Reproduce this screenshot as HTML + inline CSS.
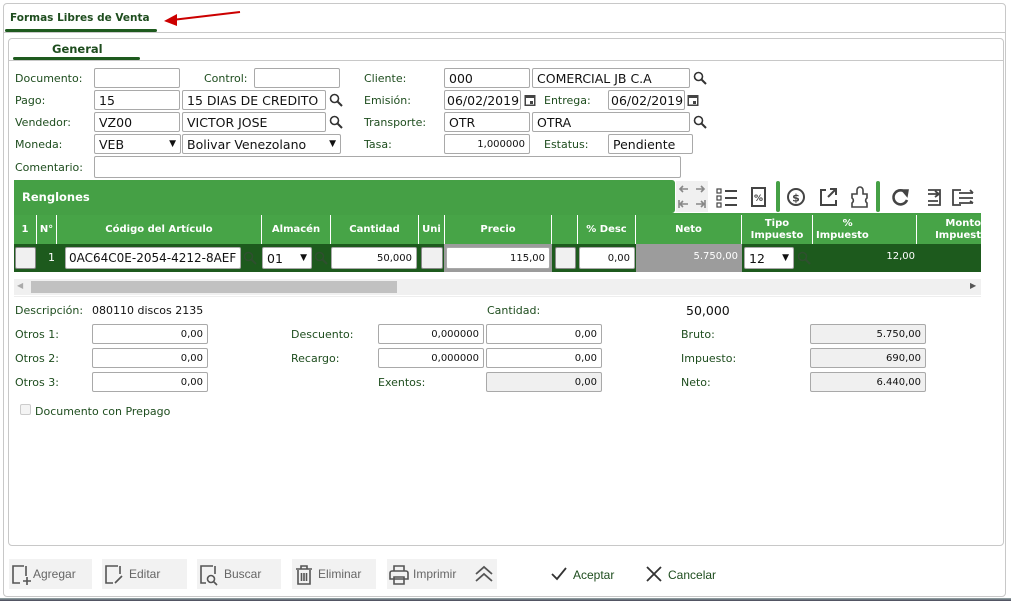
<!DOCTYPE html>
<html><head><meta charset="utf-8"><style>
*{box-sizing:border-box;margin:0;padding:0}
body{width:1011px;height:601px;background:#fff;position:relative;overflow:hidden;font-family:"DejaVu Sans","Liberation Sans",sans-serif;font-size:11px;color:#1e4d1e}
.a{position:absolute}
.l{position:absolute;color:#1e4d1e;font-size:11px;line-height:14px}
.i{position:absolute;border:1px solid #a9a9a9;border-radius:2px;background:#fff;height:20px;font-size:12.5px;color:#111;padding:1px 4px;line-height:17px;font-family:"DejaVu Sans",sans-serif;white-space:nowrap;overflow:hidden}
.r{text-align:right;font-size:10px;line-height:17px}
.g{background:#f0f0f0}
.hd{position:absolute;top:215px;height:29px;color:#fff;font-weight:bold;font-size:10px;text-align:center;line-height:12px;border-right:1px solid #fff;display:flex;align-items:center;justify-content:center}
.btn{position:absolute;top:559px;height:30px;background:#f2f2f2;color:#666;font-size:12px;line-height:31px;font-family:"Liberation Sans",sans-serif}
</style></head><body>
<div class="a" style="left:3px;top:3px;width:1003px;height:594px;border:1px solid #c8c8c8;border-radius:4px"></div>
<div class="a" style="left:4px;top:32px;width:1001px;height:1px;background:#c8c8c8"></div>
<div class="a" style="left:10px;top:12px;font-weight:bold;font-size:10.5px;color:#1e4d1e">Formas Libres de Venta</div>
<div class="a" style="left:5px;top:29px;width:152px;height:3px;background:#1e5a1e;border-radius:2px"></div>
<svg class="a" style="left:158px;top:8px" width="84" height="20"><path d="M82 4 L14 12" stroke="#c00" stroke-width="2"/><path d="M6 13 L19 6 L19 18 Z" fill="#c00"/></svg>
<div class="a" style="left:8px;top:38px;width:996px;height:508px;border:1px solid #c8c8c8;border-radius:4px"></div>
<div class="a" style="left:9px;top:60px;width:994px;height:1px;background:#c8c8c8"></div>
<div class="a" style="left:52px;top:42px;font-weight:bold;font-size:11.5px;color:#1e4d1e">General</div>
<div class="a" style="left:13px;top:57px;width:127px;height:3px;background:#1e5a1e;border-radius:2px"></div>
<div class="l" style="left:15px;top:72px">Documento:</div>
<div class="i" style="left:94px;top:68px;width:86px"></div>
<div class="l" style="left:204px;top:72px">Control:</div>
<div class="i" style="left:254px;top:68px;width:86px"></div>
<div class="l" style="left:15px;top:94px">Pago:</div>
<div class="i" style="left:94px;top:90px;width:86px">15</div>
<div class="i" style="left:182px;top:90px;width:144px">15 DIAS DE CREDITO</div>
<div class="l" style="left:15px;top:116px">Vendedor:</div>
<div class="i" style="left:94px;top:112px;width:86px">VZ00</div>
<div class="i" style="left:182px;top:112px;width:144px">VICTOR JOSE</div>
<div class="l" style="left:15px;top:138px">Moneda:</div>
<div class="i" style="left:94px;top:134px;width:87px">VEB<span style="position:absolute;right:4px;font-size:9px">▼</span></div>
<div class="i" style="left:182px;top:134px;width:159px">Bolivar Venezolano<span style="position:absolute;right:4px;font-size:9px">▼</span></div>
<div class="l" style="left:15px;top:161px">Comentario:</div>
<div class="i" style="left:94px;top:156px;width:587px;height:22px"></div>
<div class="l" style="left:364px;top:72px">Cliente:</div>
<div class="i" style="left:444px;top:68px;width:86px">000</div>
<div class="i" style="left:532px;top:68px;width:158px">COMERCIAL JB C.A</div>
<div class="l" style="left:364px;top:94px">Emisión:</div>
<div class="i" style="left:444px;top:90px;width:77px;padding:1px 2px">06/02/2019</div>
<div class="l" style="left:544px;top:94px">Entrega:</div>
<div class="i" style="left:608px;top:90px;width:77px;padding:1px 2px">06/02/2019</div>
<div class="l" style="left:364px;top:116px">Transporte:</div>
<div class="i" style="left:444px;top:112px;width:86px">OTR</div>
<div class="i" style="left:532px;top:112px;width:158px">OTRA</div>
<div class="l" style="left:364px;top:138px">Tasa:</div>
<div class="i r" style="left:444px;top:134px;width:86px">1,000000</div>
<div class="l" style="left:544px;top:138px">Estatus:</div>
<div class="i" style="left:608px;top:134px;width:85px">Pendiente</div>
<svg class="a" style="left:329px;top:93px" width="14" height="14"><circle cx="5.5" cy="5.5" r="4" fill="none" stroke="#333" stroke-width="1.6"/><path d="M8.5 8.5 L13 13" stroke="#333" stroke-width="2"/></svg>
<svg class="a" style="left:329px;top:115px" width="14" height="14"><circle cx="5.5" cy="5.5" r="4" fill="none" stroke="#333" stroke-width="1.6"/><path d="M8.5 8.5 L13 13" stroke="#333" stroke-width="2"/></svg>
<svg class="a" style="left:693px;top:71px" width="14" height="14"><circle cx="5.5" cy="5.5" r="4" fill="none" stroke="#333" stroke-width="1.6"/><path d="M8.5 8.5 L13 13" stroke="#333" stroke-width="2"/></svg>
<svg class="a" style="left:693px;top:115px" width="14" height="14"><circle cx="5.5" cy="5.5" r="4" fill="none" stroke="#333" stroke-width="1.6"/><path d="M8.5 8.5 L13 13" stroke="#333" stroke-width="2"/></svg>
<svg class="a" style="left:524px;top:93px" width="12" height="14"><rect x="0.5" y="2" width="11" height="11" fill="#444"/><rect x="2" y="5" width="8" height="6.5" fill="#fff"/><rect x="6" y="8" width="3" height="3" fill="#444"/></svg>
<svg class="a" style="left:687px;top:93px" width="12" height="14"><rect x="0.5" y="2" width="11" height="11" fill="#444"/><rect x="2" y="5" width="8" height="6.5" fill="#fff"/><rect x="6" y="8" width="3" height="3" fill="#444"/></svg>
<div class="a" style="left:14px;top:180px;width:661px;height:33px;background:#45a045;border-radius:0 3px 3px 0"></div>
<div class="a" style="left:22px;top:190px;color:#fff;font-weight:bold;font-size:11.5px">Renglones</div>
<div class="a" style="left:14px;top:213px;width:967px;height:2px;background:#45a045"></div>
<div class="a" style="left:676px;top:181px;width:32px;height:31px;background:#f0f0f0"></div>
<svg class="a" style="left:676px;top:181px" width="300" height="32" fill="none" stroke="#444" stroke-width="1.6">
<path d="M4 8 H12 M7 5 L4 8 L7 11 M20 8 H28 M25 5 L28 8 L25 11" stroke="#888"/>
<path d="M3 19 V27 M4 23 H12 M7 20 L4 23 L7 26 M29 19 V27 M20 23 H28 M25 20 L28 23 L25 26" stroke="#888"/>
<rect x="41" y="8" width="4" height="4" stroke-width="1.2"/><rect x="41" y="15" width="4" height="4" stroke-width="1.2"/><rect x="41" y="22" width="4" height="4" stroke-width="1.2"/>
<path d="M49 10 H61 M49 17 H61 M49 24 H61" stroke-width="2"/>
<rect x="76" y="7" width="13" height="18" stroke-width="2"/><text x="82.5" y="20" font-size="9" font-weight="bold" fill="#444" stroke="none" text-anchor="middle" font-family="DejaVu Sans">%</text>
<circle cx="120" cy="16" r="8" stroke-width="2"/><text x="120" y="20.5" font-size="11" font-weight="bold" fill="#444" stroke="none" text-anchor="middle" font-family="DejaVu Sans">$</text>
<path d="M150 9 H145 V24 H160 V19 M152 16 L160 8 M154 8 H160 V14" stroke-width="2"/>
<path d="M176 13 H181 V9 A3 3 0 0 1 187 9 V13 H191 V17 A3 3 0 0 0 191 22 V26 H176 V22 A3 3 0 0 0 176 17 Z" stroke-width="1.6"/>
<path d="M230 12 A7 7 0 1 0 231 19" stroke-width="2.6"/><path d="M226 9 L232 9 L231 15 Z" fill="#444"/>
<path d="M252 9 H264 V24 H252 M252 13 H262 M252 20 H262 M259 10 L263 13 L259 16" stroke-width="1.8"/>
<path d="M285 9 H277 V24 H285 M283 12 H297 M283 17 H297 M283 22 H297 M294 9 L297 12 M294 20 L297 22" stroke-width="1.8"/>
</svg>
<div class="a" style="left:776px;top:181px;width:4px;height:31px;background:#45a045;border-radius:2px"></div>
<div class="a" style="left:876px;top:181px;width:4px;height:31px;background:#45a045;border-radius:2px"></div>
<div class="a" style="left:14px;top:215px;width:967px;height:29px;background:#47a447"></div>
<div class="hd" style="left:14px;width:23px">1</div>
<div class="hd" style="left:37px;width:20px">N°</div>
<div class="hd" style="left:57px;width:205px">Código del Artículo</div>
<div class="hd" style="left:262px;width:69px">Almacén</div>
<div class="hd" style="left:331px;width:88px">Cantidad</div>
<div class="hd" style="left:419px;width:26px">Uni</div>
<div class="hd" style="left:445px;width:107px">Precio</div>
<div class="hd" style="left:552px;width:26px"></div>
<div class="hd" style="left:578px;width:58px">% Desc</div>
<div class="hd" style="left:636px;width:106px">Neto</div>
<div class="hd" style="left:742px;width:71px">Tipo<br>Impuesto</div>
<div class="hd" style="left:813px;width:104px;justify-content:flex-start;padding-left:3px;text-align:center">&nbsp;&nbsp;&nbsp;%<br>Impuesto</div>
<div class="hd" style="left:917px;width:64px;border:none;justify-content:flex-end;text-align:right;overflow:hidden;white-space:nowrap">Monto<br>Impuest</div>
<div class="a" style="left:14px;top:244px;width:967px;height:28px;background:#1d5a1d"></div>
<div class="a" style="left:636px;top:244px;width:106px;height:28px;background:#9c9c9c"></div>
<div class="a" style="left:444px;top:244px;width:108px;height:28px;background:#9c9c9c"></div>
<div class="a g" style="left:15px;top:247px;width:21px;height:22px;border:1px solid #888;border-radius:2px"></div>
<div class="a" style="left:48px;top:251px;color:#fff;font-size:11px">1</div>
<div class="i" style="left:65px;top:247px;width:176px;height:22px;line-height:19px;padding:1px 3px;font-size:12px">0AC64C0E-2054-4212-8AEF</div>
<div class="i" style="left:262px;top:247px;width:50px;height:22px;line-height:19px">01<span style="position:absolute;right:4px;font-size:9px">▼</span></div>
<div class="i r" style="left:331px;top:247px;width:86px;height:22px;line-height:19px">50,000</div>
<div class="a g" style="left:421px;top:247px;width:22px;height:22px;border:1px solid #888;border-radius:2px"></div>
<div class="i r" style="left:446px;top:247px;width:104px;height:22px;line-height:19px">115,00</div>
<div class="a g" style="left:555px;top:247px;width:21px;height:22px;border:1px solid #888;border-radius:2px"></div>
<div class="i r" style="left:579px;top:247px;width:56px;height:22px;line-height:19px">0,00</div>
<div class="a" style="left:636px;top:251px;width:102px;text-align:right;color:#fff;font-size:10px">5.750,00</div>
<div class="i" style="left:744px;top:247px;width:50px;height:22px;line-height:19px">12<span style="position:absolute;right:4px;font-size:9px">▼</span></div>
<div class="a" style="left:813px;top:251px;width:102px;text-align:right;color:#fff;font-size:10px">12,00</div>
<svg class="a" style="left:243px;top:251px" width="14" height="14"><circle cx="5.5" cy="5.5" r="4" fill="none" stroke="#2f4f2f" stroke-width="1.6"/><path d="M8.5 8.5 L13 13" stroke="#2f4f2f" stroke-width="2"/></svg>
<svg class="a" style="left:314px;top:251px" width="14" height="14"><circle cx="5.5" cy="5.5" r="4" fill="none" stroke="#2f4f2f" stroke-width="1.6"/><path d="M8.5 8.5 L13 13" stroke="#2f4f2f" stroke-width="2"/></svg>
<svg class="a" style="left:797px;top:251px" width="14" height="14"><circle cx="5.5" cy="5.5" r="4" fill="none" stroke="#2f4f2f" stroke-width="1.6"/><path d="M8.5 8.5 L13 13" stroke="#2f4f2f" stroke-width="2"/></svg>
<div class="a" style="left:14px;top:279px;width:967px;height:16px;background:#f0f0f0"></div>
<div class="a" style="left:31px;top:281px;width:366px;height:12px;background:#c1c1c1"></div>
<div class="a" style="left:17px;top:281px;font-size:8px;color:#aaa">◀</div>
<div class="a" style="left:970px;top:281px;font-size:8px;color:#555">▶</div>
<div class="a" style="left:14px;top:296px;width:967px;height:1px;background:#eee"></div>
<div class="l" style="left:15px;top:304px">Descripción:</div>
<div class="a" style="left:92px;top:304px;color:#111;font-size:11px">080110 discos 2135</div>
<div class="l" style="left:487px;top:304px">Cantidad:</div>
<div class="a" style="left:686px;top:303px;color:#111;font-size:12.5px">50,000</div>
<div class="l" style="left:15px;top:328px">Otros 1:</div>
<div class="i r" style="left:92px;top:324px;width:116px">0,00</div>
<div class="l" style="left:15px;top:352px">Otros 2:</div>
<div class="i r" style="left:92px;top:348px;width:116px">0,00</div>
<div class="l" style="left:15px;top:376px">Otros 3:</div>
<div class="i r" style="left:92px;top:372px;width:116px">0,00</div>
<div class="l" style="left:291px;top:328px">Descuento:</div>
<div class="i r" style="left:378px;top:324px;width:106px">0,000000</div>
<div class="i r" style="left:486px;top:324px;width:116px">0,00</div>
<div class="l" style="left:291px;top:352px">Recargo:</div>
<div class="i r" style="left:378px;top:348px;width:106px">0,000000</div>
<div class="i r" style="left:486px;top:348px;width:116px">0,00</div>
<div class="l" style="left:378px;top:376px">Exentos:</div>
<div class="i r g" style="left:486px;top:372px;width:116px">0,00</div>
<div class="l" style="left:681px;top:328px">Bruto:</div>
<div class="i r g" style="left:810px;top:324px;width:116px">5.750,00</div>
<div class="l" style="left:681px;top:352px">Impuesto:</div>
<div class="i r g" style="left:810px;top:348px;width:116px">690,00</div>
<div class="l" style="left:681px;top:376px">Neto:</div>
<div class="i r g" style="left:810px;top:372px;width:116px">6.440,00</div>
<div class="a" style="left:20px;top:404px;width:11px;height:11px;border:1px solid #ccc;border-radius:2px;background:#f4f4f4"></div>
<div class="l" style="left:35px;top:405px">Documento con Prepago</div>
<div class="btn" style="left:9px;width:83px"><svg class="a" style="left:1px;top:5px" width="22" height="22" fill="none" stroke="#555" stroke-width="1.6"><path d="M14 2 H3 V19 H10 M16 2 V12 M13 17 H21 M17 13 V21"/></svg><span class="a" style="left:24px">Agregar</span></div>
<div class="btn" style="left:102px;width:85px"><svg class="a" style="left:1px;top:5px" width="22" height="22" fill="none" stroke="#555" stroke-width="1.6"><path d="M15 2 H3 V19 H10 M17 2 V10 M12 19 L19 12"/></svg><span class="a" style="left:27px">Editar</span></div>
<div class="btn" style="left:197px;width:84px"><svg class="a" style="left:1px;top:5px" width="22" height="22" fill="none" stroke="#555" stroke-width="1.6"><path d="M15 2 H3 V19 H8 M17 2 V10"/><circle cx="13" cy="15" r="3.5"/><path d="M15.5 17.5 L19 21"/></svg><span class="a" style="left:27px">Buscar</span></div>
<div class="btn" style="left:292px;width:84px"><svg class="a" style="left:1px;top:5px" width="22" height="22" fill="none" stroke="#555" stroke-width="1.6"><path d="M3 5 H19 M8 5 V2 H14 V5 M5 6 V20 H17 V6 M8.5 9 V17 M11 9 V17 M13.5 9 V17"/></svg><span class="a" style="left:26px">Eliminar</span></div>
<div class="btn" style="left:387px;width:83px"><svg class="a" style="left:1px;top:5px" width="22" height="22" fill="none" stroke="#555" stroke-width="1.6"><path d="M6 7 V2 H16 V7 M4 7 H18 A2 2 0 0 1 20 9 V15 H2 V9 A2 2 0 0 1 4 7 M6 13 V20 H16 V13 Z"/></svg><span class="a" style="left:26px">Imprimir</span></div>
<div class="btn" style="left:470px;width:27px"><svg class="a" style="left:4px;top:6px" width="20" height="18" fill="none" stroke="#555" stroke-width="1.8"><path d="M2 9 L10 2 L18 9 M2 16 L10 9 L18 16"/></svg></div>
<svg class="a" style="left:550px;top:566px" width="18" height="16" fill="none" stroke="#333" stroke-width="1.8"><path d="M2 8 L7 13 L16 2"/></svg>
<div class="a" style="left:573px;top:568px;font-family:'Liberation Sans',sans-serif;font-size:12px;color:#1e4d1e">Aceptar</div>
<svg class="a" style="left:645px;top:565px" width="18" height="18" fill="none" stroke="#333" stroke-width="1.8"><path d="M2 2 L16 16 M16 2 L2 16"/></svg>
<div class="a" style="left:668px;top:568px;font-family:'Liberation Sans',sans-serif;font-size:12px;color:#1e4d1e">Cancelar</div>
<div class="a" style="left:0;top:598px;width:1011px;height:3px;background:linear-gradient(#9aa,#445)"></div>
</body></html>
